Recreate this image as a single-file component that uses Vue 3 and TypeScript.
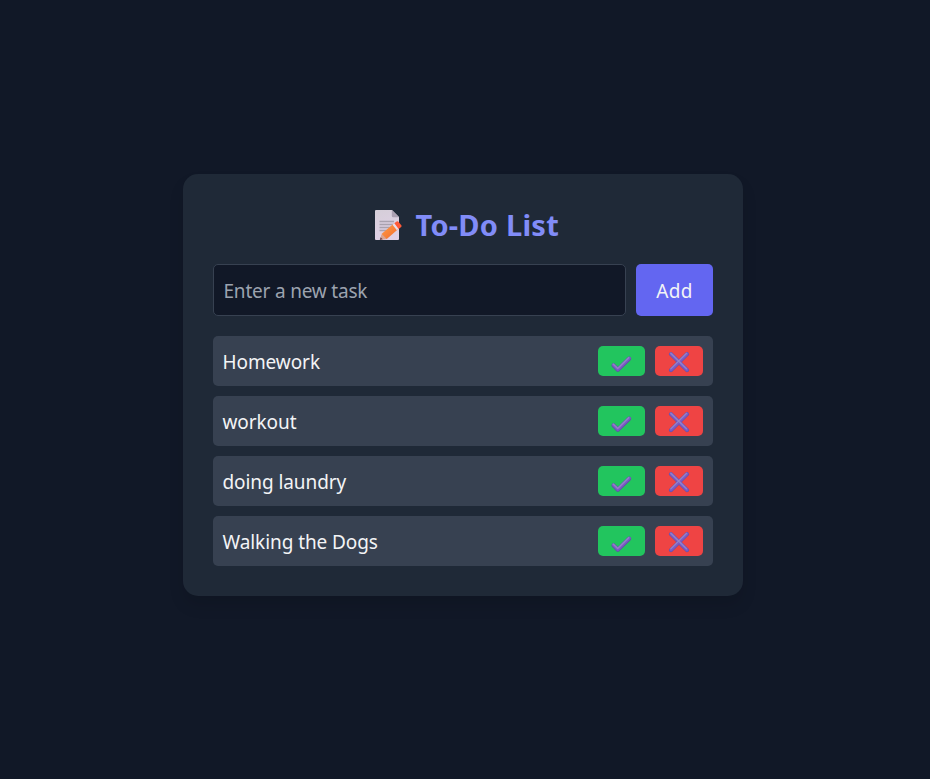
<script setup lang="ts">
import { ref } from 'vue'

interface Task {
  id: number
  text: string
  tone: string
}

const draft = ref('')
const tasks = ref<Task[]>([
  { id: 1, text: 'Homework', tone: 'normal' },
  { id: 2, text: 'workout', tone: 'normal' },
  { id: 3, text: 'doing laundry', tone: 'normal' },
  { id: 4, text: 'Walking the Dogs', tone: 'normal' },
])

function addTask(): void {
  const text = draft.value.trim()
  if (!text) return
  tasks.value.push({ id: Date.now(), text, tone: 'normal' })
  draft.value = ''
}

function toggleTask(task: Task): void {
  task.tone = task.tone === 'done' ? 'normal' : 'done'
}

function removeTask(id: number): void {
  tasks.value = tasks.value.filter((t) => t.id !== id)
}
</script>

<template>
  <main class="page">
    <section class="card">
      <h1 class="title">
        <svg class="memo" viewBox="0 0 30 32" aria-hidden="true">
          <defs>
            <linearGradient id="paper" x1="0" y1="0" x2="0.3" y2="1">
              <stop offset="0" stop-color="#d5ced8" />
              <stop offset="1" stop-color="#dfd0e6" />
            </linearGradient>
            <linearGradient id="pencil" x1="0" y1="0" x2="1" y2="1">
              <stop offset="0" stop-color="#ffa04a" />
              <stop offset="1" stop-color="#f26a2c" />
            </linearGradient>
          </defs>
          <path d="M3 1H18L25 8V30Q25 31 24 31H2Q1 31 1 30V2Q1 1 2 1Z" fill="url(#paper)" />
          <path d="M17.800 1L25 8.200H19.300Q17.800 8.200 17.800 6.700Z" fill="#aba0b2" />
          <path d="M5.500 12.500H20M5.500 15.500H20M5.500 18.500H17M5.500 21.500H13" stroke="#a9a1af" stroke-width="1.300" />
          <path d="M6.500 30L8.300 24.300L19.300 15L24 20.300L12.800 30Z" fill="url(#pencil)" />
          <path d="M5.800 31L7.800 25L12.800 30Z" fill="#d9a592" />
          <path d="M5.800 31L6.600 28.300L8.800 30.300Z" fill="#70464f" />
          <path d="M18.500 15.800L21 13.800L25.200 19L22.900 21.200Z" fill="#e9e0ec" />
          <path d="M20.300 14.300L22.600 12.600Q23.600 11.900 24.400 12.800L27.300 16.300Q28 17.200 27.200 17.900L24.600 20Z" fill="#ff5a38" />
        </svg>
        <span>To-Do List</span>
      </h1>

      <form class="entry" @submit.prevent="addTask">
        <input v-model="draft" class="field" type="text" placeholder="Enter a new task" />
        <button class="add" type="submit">Add</button>
      </form>

      <ul class="list">
        <li v-for="task in tasks" :key="task.id" class="row" :class="task.tone">
          <span class="label">{{ task.text }}</span>
          <span class="actions">
            <button class="action complete" type="button" aria-label="Complete" @click="toggleTask(task)">
              <svg class="glyph" viewBox="0 0 24 24" aria-hidden="true">
                <path d="M3.500 16.400L7.800 20.900L19.200 9.700" class="edge" />
                <path d="M3.500 16L7.800 20.400L19.200 9.200" class="body" />
                <path d="M3.300 15.200L7.700 19.500L18.700 8.700" class="shine" />
              </svg>
            </button>
            <button class="action remove" type="button" aria-label="Delete" @click="removeTask(task.id)">
              <svg class="glyph" viewBox="0 0 24 24" aria-hidden="true">
                <path d="M4 5.200L20 21.200M20 5.200L4 21.200" class="edge" />
                <path d="M4 4.900L20 20.800M20 4.900L4 20.800" class="body" />
                <path d="M3.800 4.200L19.500 19.800M19.600 4.300L3.800 19.900" class="shine" />
              </svg>
            </button>
          </span>
        </li>
      </ul>
    </section>
  </main>
</template>

<style>
body {
  background: #111827;
}
</style>

<style scoped>
* {
  box-sizing: border-box;
}

.page {
  min-height: 100vh;
  padding: 0 4px 9px 0;
  display: flex;
  align-items: center;
  justify-content: center;
  background: #111827;
  color: #f3f4f6;
  font-family: "Noto Sans", "Open Sans", sans-serif;
  font-size: 19px;
}

.card {
  width: 560px;
  padding: 30px;
  border-radius: 15px;
  background: #1f2937;
  box-shadow: 0 10px 15px rgba(0, 0, 0, 0.1);
}

.title {
  display: flex;
  align-items: center;
  justify-content: center;
  gap: 11.500px;
  height: 40px;
  margin: 0 0 20px;
  padding: 2px 0 0 7px;
  color: #818cf8;
  font-size: 29px;
  font-weight: 700;
  letter-spacing: 0.250px;
  line-height: 40px;
  white-space: nowrap;
}

.memo {
  width: 30px;
  height: 32px;
  flex: none;
}

.entry {
  display: flex;
  gap: 10px;
  height: 52px;
  margin-bottom: 20px;
}

.field {
  flex: 1;
  min-width: 0;
  padding: 2px 10px 0 9.500px;
  border: 1px solid #374151;
  border-radius: 5px;
  outline: none;
  background: #111827;
  color: #f3f4f6;
  font: inherit;
  letter-spacing: -0.200px;
}

.field::placeholder {
  color: #9ca3af;
  opacity: 1;
}

.add {
  width: 77px;
  padding: 2px 0 0;
  border: 0;
  border-radius: 5px;
  background: #6366f1;
  color: #f3f4f6;
  font: inherit;
  letter-spacing: 0.300px;
  cursor: pointer;
}

.list {
  display: grid;
  gap: 10px;
  margin: 0;
  padding: 0;
  list-style: none;
}

.row {
  display: flex;
  align-items: center;
  justify-content: space-between;
  height: 50px;
  padding: 0 10px 0 9.500px;
  border-radius: 5px;
  background: #374151;
}

.label {
  padding-top: 2px;
  letter-spacing: -0.080px;
}

.done .label {
  text-decoration: line-through;
}

.actions {
  display: flex;
  gap: 10px;
}

.action {
  display: flex;
  align-items: center;
  justify-content: center;
  width: 47px;
  height: 30px;
  padding: 0;
  border: 0;
  border-radius: 5px;
  cursor: pointer;
}

.complete {
  background: #22c55e;
}

.remove {
  width: 48px;
  background: #ef4444;
}

.glyph {
  width: 24px;
  height: 24px;
  fill: none;
  stroke-linecap: round;
  stroke-linejoin: round;
}

.edge {
  stroke: #6250a6;
  stroke-width: 4;
}

.body {
  stroke: #7b5bc6;
  stroke-width: 3.200;
}

.shine {
  stroke: #9584c6;
  stroke-width: 1.200;
}
</style>
